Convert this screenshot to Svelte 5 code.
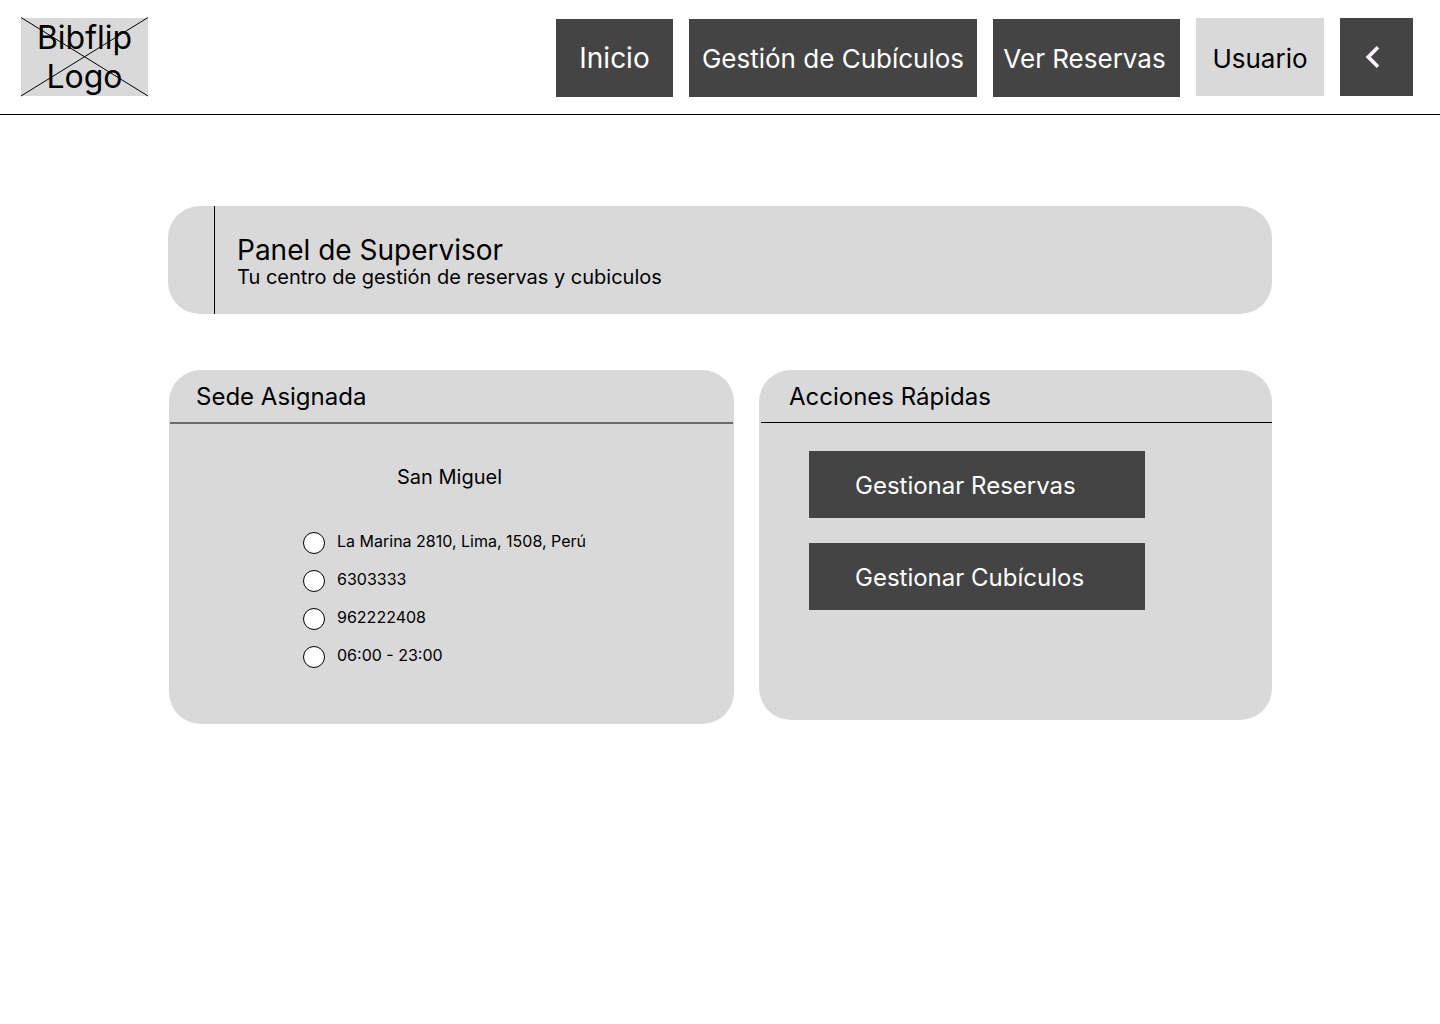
<script lang="ts">
  interface NavItem {
    id: string;
    label: string;
    href: string;
  }

  const navItems: NavItem[] = [
    { id: "home", label: "Inicio", href: "#inicio" },
    { id: "cubicles", label: "Gestión de Cubículos", href: "#cubiculos" },
    { id: "bookings", label: "Ver Reservas", href: "#reservas" },
  ];

  const site = {
    name: "San Miguel",
    details: ["La Marina 2810, Lima, 1508, Perú", "6303333", "962222408", "06:00 - 23:00"],
  };

  const actions = ["Gestionar Reservas", "Gestionar Cubículos"];
</script>

<header class="topbar">
  <a class="logo" href="#inicio">
    <span>Bibflip</span>
    <span>Logo</span>
    <svg class="logo-cross" viewBox="0 0 127 78" preserveAspectRatio="none" aria-hidden="true">
      <path d="M0 -0.5L127 78M127 -0.5L0 78" stroke="#000" fill="none" />
    </svg>
  </a>

  <div class="menu">
    <nav class="links" aria-label="Principal">
      {#each navItems as item (item.id)}
        <a class="nav-item {item.id}" href={item.href}>{item.label}</a>
      {/each}
    </nav>
    <button class="nav-item user" type="button">Usuario</button>
    <button class="nav-item back" type="button" aria-label="Volver">
      <svg width="44" height="44" viewBox="0 0 24 24" aria-hidden="true">
        <path d="M15.41 7.41L14 6l-6 6 6 6 1.41-1.41L10.83 12z" fill="#fef7ff" />
      </svg>
    </button>
  </div>
</header>

<main class="content">
  <section class="banner">
    <div class="banner-text">
      <h1>Panel de Supervisor</h1>
      <p>Tu centro de gestión de reservas y cubiculos</p>
    </div>
  </section>

  <div class="cards">
    <section class="card site">
      <h2>Sede Asignada</h2>
      <div class="site-body">
        <h3>{site.name}</h3>
        <ul>
          {#each site.details as detail}
            <li><span class="dot"></span>{detail}</li>
          {/each}
        </ul>
      </div>
    </section>

    <section class="card actions">
      <h2>Acciones Rápidas</h2>
      <div class="actions-body">
        {#each actions as action}
          <button class="action" type="button">{action}</button>
        {/each}
      </div>
    </section>
  </div>
</main>

<style>
  :global(body) {
    background: #fff;
    color: #000;
    font-family: Inter, sans-serif;
  }

  h1,
  h2,
  h3,
  p,
  ul {
    margin: 0;
    padding: 0;
    font-weight: 400;
  }

  button {
    border: none;
    font-family: inherit;
    cursor: pointer;
  }

  .topbar {
    display: flex;
    align-items: flex-start;
    justify-content: space-between;
    padding: 18px 27px 17px 21px;
    border-bottom: 1px solid #000;
  }

  .logo {
    position: relative;
    display: flex;
    flex-direction: column;
    width: 127px;
    background: #d9d9d9;
    color: #000;
    font-size: 32px;
    line-height: 39px;
    text-align: center;
    text-decoration: none;
  }

  .logo-cross {
    position: absolute;
    inset: 0;
    width: 100%;
    height: 100%;
    overflow: visible;
  }

  .menu,
  .links {
    display: flex;
    gap: 16px;
  }

  .links {
    padding-top: 1px;
  }

  .nav-item {
    display: flex;
    align-items: center;
    justify-content: center;
    box-sizing: border-box;
    height: 78px;
    padding: 0;
    background: #444;
    color: #fff;
    font-size: 26px;
    text-decoration: none;
    white-space: nowrap;
  }

  .home {
    width: 117px;
    font-size: 28px;
  }

  .cubicles {
    width: 288px;
  }

  .bookings {
    width: 187px;
    padding-right: 4px;
  }

  .user {
    width: 128px;
    padding-top: 2px;
    background: #d9d9d9;
    color: #000;
  }

  .back {
    width: 73px;
    justify-content: flex-start;
    padding-left: 11px;
  }

  .content {
    max-width: 1104px;
    margin: 0 auto;
    padding: 91px 24px 48px;
  }

  .banner {
    padding-left: 46px;
    background: #d9d9d9;
    border-radius: 32px;
  }

  .banner-text {
    padding: 27px 22px;
    border-left: 1px solid #000;
  }

  h1 {
    font-size: 28px;
    line-height: 34px;
  }

  .banner p {
    font-size: 20px;
    line-height: 20px;
  }

  .cards {
    display: grid;
    grid-template-columns: 565fr 513fr;
    align-items: start;
    gap: 25px;
    margin-top: 56px;
    padding-left: 1px;
  }

  .card {
    background: #d9d9d9;
    border-radius: 32px;
  }

  h2 {
    padding: 12px 28px 11px;
    font-size: 24px;
    line-height: 29px;
  }

  .site h2 {
    margin: 0 1px;
    padding-left: 26px;
    border-bottom: 2px solid #6c6c6c;
  }

  .actions h2 {
    margin-left: 2px;
    border-bottom: 1px solid #000;
  }

  .site-body {
    display: flex;
    flex-direction: column;
    align-items: center;
    padding: 41px 4px 56px 0;
  }

  h3 {
    font-size: 20px;
    line-height: 24px;
  }

  ul {
    display: flex;
    flex-direction: column;
    gap: 16px;
    margin-top: 43px;
    padding-right: 10px;
    list-style: none;
  }

  li {
    display: flex;
    gap: 12px;
    font-size: 16px;
    line-height: 18px;
  }

  .dot {
    box-sizing: border-box;
    width: 22px;
    height: 22px;
    background: #fff;
    border: 1px solid #000;
    border-radius: 50%;
  }

  .actions-body {
    display: flex;
    flex-direction: column;
    align-items: flex-start;
    gap: 25px;
    padding: 28px 50px 110px;
  }

  .action {
    width: 336px;
    max-width: 100%;
    height: 67px;
    padding: 2px 46px 0;
    background: #444;
    color: #fff;
    font-size: 24px;
    text-align: left;
    white-space: nowrap;
  }
</style>
